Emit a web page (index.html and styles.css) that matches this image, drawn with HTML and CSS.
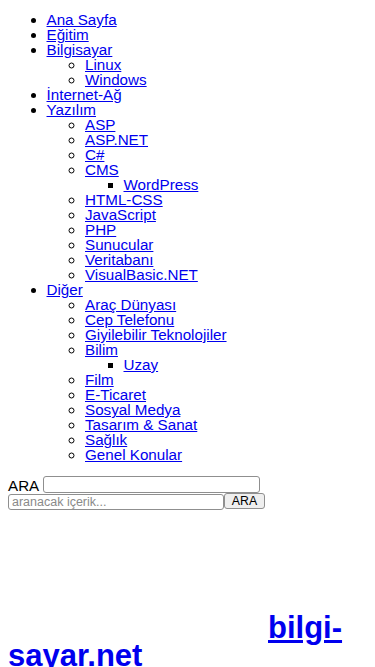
FILE: index.html
```html
<!DOCTYPE html>
<html lang="tr">
<head>
<meta charset="utf-8">
<title>bilgi-sayar.net</title>
<link rel="stylesheet" href="styles.css">
</head>
<body>
<ul class="menu">
  <li><a href="#">Ana Sayfa</a></li>
  <li><a href="#">Eğitim</a></li>
  <li><a href="#">Bilgisayar</a>
    <ul class="sub">
      <li><a href="#">Linux</a></li>
      <li><a href="#">Windows</a></li>
    </ul>
  </li>
  <li><a href="#">İnternet-Ağ</a></li>
  <li><a href="#">Yazılım</a>
    <ul class="sub">
      <li><a href="#">ASP</a></li>
      <li><a href="#">ASP.NET</a></li>
      <li><a href="#">C#</a></li>
      <li><a href="#">CMS</a>
        <ul class="subsub">
          <li><a href="#">WordPress</a></li>
        </ul>
      </li>
      <li><a href="#">HTML-CSS</a></li>
      <li><a href="#">JavaScript</a></li>
      <li><a href="#">PHP</a></li>
      <li><a href="#">Sunucular</a></li>
      <li><a href="#">Veritabanı</a></li>
      <li><a href="#">VisualBasic.NET</a></li>
    </ul>
  </li>
  <li><a href="#">Diğer</a>
    <ul class="sub">
      <li><a href="#">Araç Dünyası</a></li>
      <li><a href="#">Cep Telefonu</a></li>
      <li><a href="#">Giyilebilir Teknolojiler</a></li>
      <li><a href="#">Bilim</a>
        <ul class="subsub">
          <li><a href="#">Uzay</a></li>
        </ul>
      </li>
      <li><a href="#">Film</a></li>
      <li><a href="#">E-Ticaret</a></li>
      <li><a href="#">Sosyal Medya</a></li>
      <li><a href="#">Tasarım &amp; Sanat</a></li>
      <li><a href="#">Sağlık</a></li>
      <li><a href="#">Genel Konular</a></li>
    </ul>
  </li>
</ul>
<form class="search">
  <div class="row"><label class="lbl" for="q1">ARA</label><input class="field field-top" id="q1" type="text"></div>
  <div class="row row-bottom"><input class="field field-bottom" type="text" placeholder="aranacak içerik..."><button class="btn" type="button">ARA</button></div>
</form>
<h1 class="site"><a href="#">bilgi-sayar.net</a></h1>
</body>
</html>
```

FILE: styles.css
```css
html, body {
  margin: 0;
  padding: 0;
  background: #ffffff;
}
body {
  padding: 0 8px;
  font-family: "Liberation Sans", Arial, sans-serif;
  font-size: 15.2px;
  line-height: 15px;
  color: #000000;
  overflow: hidden;
  height: 667px;
  box-sizing: border-box;
}
a {
  color: #0000ee;
  text-decoration: underline;
}
.menu {
  margin: 12px 0 0 0;
  padding: 0 0 0 38.5px;
  list-style: disc;
}
.sub {
  margin: 0;
  padding: 0 0 0 38.5px;
  list-style: circle;
}
.subsub {
  margin: 0;
  padding: 0 0 0 38.5px;
  list-style: square;
}
.search {
  margin: 14px 0 0 0;
}
.row {
  display: flex;
  align-items: center;
  height: 17px;
}
.row-bottom {
  align-items: flex-start;
}
.lbl {
  font-size: 15.2px;
  margin-right: 4px;
  padding-top: 2px;
}
.field {
  box-sizing: border-box;
  border: 1px solid #8f8f8f;
  border-radius: 3px;
  background: #ffffff;
  padding: 0 3px;
  margin: 0;
  font-family: "Liberation Sans", Arial, sans-serif;
  font-size: 12.5px;
}
.field-top {
  width: 217px;
  height: 17px;
}
.field-bottom {
  width: 216px;
  height: 16px;
  margin-top: 1px;
}
.field::placeholder {
  color: #8a8a8a;
}
.btn {
  box-sizing: border-box;
  height: 16px;
  width: 41px;
  margin: 0;
  padding: 0;
  border: 1px solid #8f8f8f;
  border-radius: 3px;
  background: #efefef;
  font-family: "Liberation Sans", Arial, sans-serif;
  font-size: 12.3px;
  line-height: 14px;
  color: #000000;
}
.site {
  margin: 104px 0 0 0;
  font-size: 31px;
  line-height: 28px;
  font-weight: bold;
  text-indent: 260px;
}
```
